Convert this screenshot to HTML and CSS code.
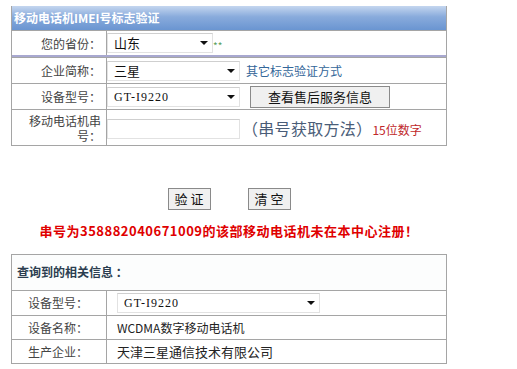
FILE: index.html
```html
<!DOCTYPE html>
<html lang="zh-CN">
    <head>
        <meta charset="utf-8">
        <link rel="stylesheet" href="styles.css">
    </head>
    <body>
        <main class="page">
            <section class="form-box">
                <div class="form-title">移动电话机IMEI号标志验证</div>
                <div class="form-row row-province">
                    <label class="label">您的省份：</label>
                    <div class="field">
                        <span class="select w106"><select><option>山东</option></select></span>
                        <span class="stars">**</span>
                    </div>
                </div>
                <div class="form-row">
                    <label class="label">企业简称：</label>
                    <div class="field">
                        <span class="select w133"><select><option>三星</option></select></span>
                        <a class="link" href="#">其它标志验证方式</a>
                    </div>
                </div>
                <div class="form-row">
                    <label class="label">设备型号：</label>
                    <div class="field">
                        <span class="select w133"><select class="mono"><option>GT-I9220</option></select></span>
                        <button class="btn btn-wide" type="button">查看售后服务信息</button>
                    </div>
                </div>
                <div class="form-row row-serial">
                    <label class="label">移动电话机串号：</label>
                    <div class="field">
                        <input class="text-input" type="text">
                        <a class="howto" href="#">（串号获取方法）</a>
                        <span class="hint">15位数字</span>
                    </div>
                </div>
            </section>

            <div class="actions">
                <button class="btn" type="button">验 证</button>
                <button class="btn" type="button">清 空</button>
            </div>

            <p class="result-msg">串号为358882040671009的该部移动电话机未在本中心注册！</p>

            <section class="info-box">
                <div class="info-title">查询到的相关信息 ：</div>
                <div class="info-row">
                    <div class="info-label">设备型号：</div>
                    <div class="info-value">
                        <span class="select w203"><select class="mono"><option>GT-I9220</option></select></span>
                    </div>
                </div>
                <div class="info-row">
                    <div class="info-label">设备名称：</div>
                    <div class="info-value">WCDMA数字移动电话机</div>
                </div>
                <div class="info-row">
                    <div class="info-label">生产企业：</div>
                    <div class="info-value">天津三星通信技术有限公司</div>
                </div>
            </section>
        </main>
    </body>
</html>
```

FILE: styles.css
```css
body{
    margin: 0;
    font-family: "Noto Sans CJK SC", "Liberation Sans", sans-serif;
    font-size: 12px;
    color: #333;
    background: #fff;
}
.page{
    width: 436px;
    padding: 6px 0 0 11px;
}
.form-box{
    border: 1px solid #a5a5a5;
    border-top: 0;
}
.form-title{
    height: 24px;
    line-height: 24px;
    padding-left: 2px;
    color: #fff;
    font-weight: bold;
    font-size: 12px;
    background: linear-gradient(#c4d6ef, #89abdc 45%, #6a95d1);
}
.form-row{
    display: grid;
    grid-template-columns: 95px 1fr;
    height: 25px;
    border-top: 1px solid #a5a5a5;
}
.row-province{
    height: 24px;
    border-bottom: 2px solid #a8a8d0;
}
.form-row.row-serial{
    height: 35px;
}
.label{
    border-right: 1px solid #a5a5a5;
    text-align: right;
    padding-right: 5px;
    display: flex;
    align-items: center;
    justify-content: flex-end;
    color: #444;
    line-height: 15px;
}
.row-serial .label{
    padding-left: 8px;
}
.field{
    display: flex;
    align-items: center;
    gap: 6px;
}
.select{
    position: relative;
    display: inline-block;
    height: 20px;
}
.select select{
    appearance: none;
    -webkit-appearance: none;
    width: 100%;
    height: 20px;
    border: 1px solid #e2e2e2;
    border-top-color: #cfcfcf;
    background: #fff;
    font-family: "Noto Sans CJK SC", sans-serif;
    font-size: 13px;
    color: #111;
    padding: 0 0 0 6px;
    line-height: 18px;
}
.select select.mono{
    font-family: "Liberation Serif", "Noto Sans CJK SC", serif;
    font-size: 12px;
    letter-spacing: 1px;
}
.select::after{
    content: '';
    position: absolute;
    right: 5px;
    top: 8px;
    border-style: solid;
    border-width: 4px 4px 0 4px;
    border-color: #111 transparent transparent transparent;
}
.w106{ width: 106px; }
.w133{ width: 133px; }
.w203{ width: 203px; }
.stars{
    color: #5aa05a;
    font-size: 10px;
    margin-left: -6px;
    padding-top: 4px;
}
.link{
    color: #336699;
    text-decoration: none;
}
.btn{
    font-family: "Noto Sans CJK SC", sans-serif;
    font-size: 13px;
    color: #111;
    background: #f0f0f0;
    border: 1px solid #8a8a8a;
    height: 22px;
    padding: 0 6px;
    line-height: 20px;
}
.btn-wide{
    width: 140px;
    margin-left: 4px;
}
.text-input{
    width: 133px;
    height: 20px;
    box-sizing: border-box;
    border: 1px solid #e2e2e2;
    border-top-color: #cfcfcf;
    margin-top: 2px;
}
.howto{
    color: #4a5d78;
    font-size: 16px;
    text-decoration: none;
    margin-left: -4px;
    letter-spacing: 0.3px;
}
.hint{
    color: #c0282a;
    margin-left: -6px;
    font-size: 12px;
    padding-top: 3px;
}
.actions{
    display: flex;
    justify-content: center;
    gap: 37px;
    margin-top: 42px;
}
.actions .btn{
    width: 43px;
    padding: 0;
}
.result-msg{
    margin: 11px 0 0 0;
    text-align: center;
    color: #e00000;
    font-weight: bold;
    font-size: 13px;
    letter-spacing: 0.5px;
}
.info-box{
    margin-top: 14px;
    border: 1px solid #a5a5a5;
}
.info-title{
    height: 35px;
    line-height: 34px;
    padding-left: 5px;
    font-weight: bold;
    font-size: 12px;
    color: #2c3e50;
    background: #fcfdfd;
}
.info-row{
    display: grid;
    grid-template-columns: 95px 1fr;
    height: 23px;
    border-top: 1px solid #a5a5a5;
}
.info-row:nth-child(2){
    height: 24px;
}
.info-label{
    border-right: 1px solid #a5a5a5;
    padding-left: 16px;
    line-height: 23px;
    color: #444;
}
.info-value{
    padding-left: 10px;
    display: flex;
    align-items: center;
    color: #222;
}
.info-row:nth-child(3) .info-value{
    font-size: 12px;
}
.info-row:nth-child(4) .info-value{
    font-size: 13px;
}
```
